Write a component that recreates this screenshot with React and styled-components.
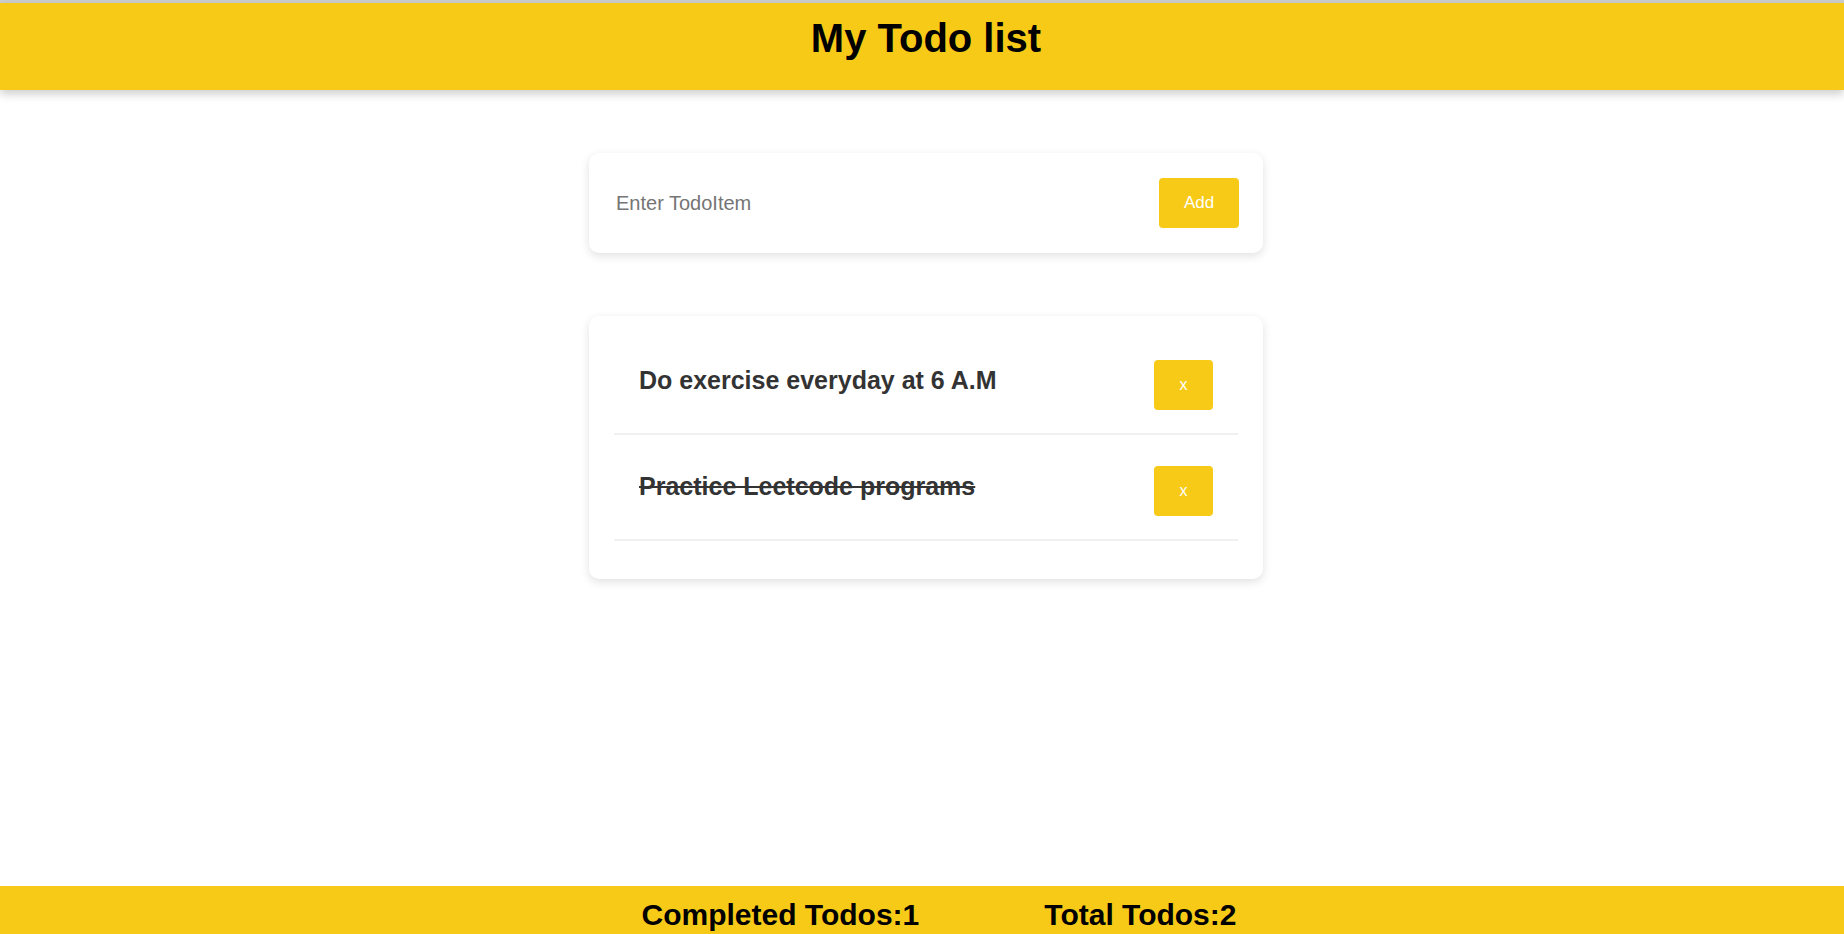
import { useState } from 'react'
import styled, { createGlobalStyle, css } from 'styled-components'

const yellow = '#f7ca18'

const GlobalStyle = createGlobalStyle`
  * {
    box-sizing: border-box;
  }
  body {
    margin: 0;
    background: #ffffff;
    font-family: 'Liberation Sans', Arial, Helvetica, sans-serif;
    overflow: hidden;
  }
`

// 전체 페이지
const Page = styled.div`
  display: flex;
  flex-direction: column;
  height: 100vh;
  border-top: 3px solid #cdcdcd;
`

// 헤더
const Header = styled.header`
  flex: none;
  height: 87px;
  padding: 13px 0 0 8px;
  background: ${yellow};
  text-align: center;
  box-shadow: 0 4px 9px rgba(0, 0, 0, 0.2);
  position: relative;
  z-index: 1;
`

const Title = styled.h1`
  margin: 0;
  font-size: 40px;
  font-weight: 700;
  color: #000000;
`

const Main = styled.main`
  flex: 1;
  display: flex;
  flex-direction: column;
  align-items: center;
  gap: 63px;
  padding: 63px 0 0 8px;
`

const Card = styled.section`
  width: 674px;
  background: #ffffff;
  border-radius: 10px;
  box-shadow: 0 3px 10px rgba(0, 0, 0, 0.12);
`

// 입력 카드
const InputCard = styled(Card)`
  display: flex;
  align-items: center;
  padding: 25px 24px;
`

const TodoInput = styled.input`
  flex: 1;
  border: none;
  outline: none;
  padding: 0 3px;
  font-family: inherit;
  font-size: 20px;
  color: #333333;
  background: transparent;
  &::placeholder {
    color: #757575;
  }
`

const YellowButton = styled.button`
  flex: none;
  height: 50px;
  border: none;
  border-radius: 4px;
  background: ${yellow};
  color: #ffffff;
  font-family: inherit;
  font-size: 17px;
  cursor: pointer;
`

const AddButton = styled(YellowButton)`
  width: 80px;
`

const RemoveButton = styled(YellowButton)`
  width: 59px;
  font-size: 16px;
`

// 목록 카드
const ListCard = styled(Card)`
  padding: 13px 25px 38px;
`

const List = styled.ul`
  margin: 0;
  padding: 0;
  list-style: none;
`

const Row = styled.li`
  display: flex;
  align-items: center;
  justify-content: space-between;
  padding: 31px 25px 23px;
  border-bottom: 2px solid #f0f0f0;
`

const ItemText = styled.span`
  padding-bottom: 9px;
  font-size: 25px;
  font-weight: 700;
  color: #333333;
  cursor: pointer;
  ${(props) =>
    props.done &&
    css`
      text-decoration: line-through;
    `}
`

// 푸터
const Footer = styled.footer`
  flex: none;
  height: 48px;
  display: flex;
  justify-content: center;
  gap: 125px;
  padding: 12px 0 0 34px;
  background: ${yellow};
`

const Stat = styled.span`
  font-size: 30px;
  font-weight: 700;
  color: #000000;
  white-space: nowrap;
`

export default function App() {
  const [text, setText] = useState('')
  const [todos, setTodos] = useState([
    { id: 1, title: 'Do exercise everyday at 6 A.M', done: false },
    { id: 2, title: 'Practice Leetcode programs', done: true },
  ])

  const addTodo = () => {
    if (!text.trim()) return
    setTodos([...todos, { id: Date.now(), title: text.trim(), done: false }])
    setText('')
  }

  const toggleTodo = (id) =>
    setTodos(todos.map((t) => (t.id === id ? { ...t, done: !t.done } : t)))

  const removeTodo = (id) => setTodos(todos.filter((t) => t.id !== id))

  const completed = todos.filter((t) => t.done).length

  return (
    <Page>
      <GlobalStyle />
      <Header>
        <Title>My Todo list</Title>
      </Header>
      <Main>
        <InputCard>
          <TodoInput
            placeholder="Enter TodoItem"
            value={text}
            onChange={(e) => setText(e.target.value)}
            onKeyDown={(e) => e.key === 'Enter' && addTodo()}
          />
          <AddButton onClick={addTodo}>Add</AddButton>
        </InputCard>
        <ListCard>
          <List>
            {todos.map((todo) => (
              <Row key={todo.id}>
                <ItemText done={todo.done} onClick={() => toggleTodo(todo.id)}>
                  {todo.title}
                </ItemText>
                <RemoveButton onClick={() => removeTodo(todo.id)}>x</RemoveButton>
              </Row>
            ))}
          </List>
        </ListCard>
      </Main>
      <Footer>
        <Stat>Completed Todos:{completed}</Stat>
        <Stat>Total Todos:{todos.length}</Stat>
      </Footer>
    </Page>
  )
}
